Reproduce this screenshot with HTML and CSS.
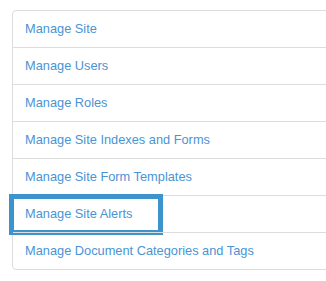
FILE: index.html
```html
<!DOCTYPE html>
<html lang="en">
<head>
  <meta charset="UTF-8" />
  <meta name="viewport" content="width=device-width, initial-scale=1.0" />
  <title>Administration</title>
  <link rel="stylesheet" href="styles.css">
</head>
<body>
  <div class="list-group">
    <a class="list-group-item" href="#">Manage Site</a>
    <a class="list-group-item" href="#">Manage Users</a>
    <a class="list-group-item" href="#">Manage Roles</a>
    <a class="list-group-item" href="#">Manage Site Indexes and Forms</a>
    <a class="list-group-item" href="#">Manage Site Form Templates</a>
    <a class="list-group-item marked" href="#">Manage Site Alerts<span class="callout"></span></a>
    <a class="list-group-item" href="#">Manage Document Categories and Tags</a>
  </div>
</body>
</html>
```

FILE: styles.css
```css
body {
  margin: 0;
  padding: 10px 0 0 12px;
  font-family: "Liberation Sans", Arial, sans-serif;
  font-size: 12.8px;
  background: #fff;
  overflow: hidden;
}
.list-group {
  display: flex;
  flex-direction: column;
  width: 340px;
  border: 1px solid #ddd;
  border-radius: 4px;
}
.list-group-item {
  position: relative;
  display: block;
  padding: 8px 12px;
  line-height: 20px;
  color: #4a94d4;
  text-decoration: none;
  border-top: 1px solid #ddd;
}
.list-group-item:first-child {
  border-top: none;
}
.callout {
  position: absolute;
  top: -2px;
  left: -4px;
  width: 144px;
  height: 31px;
  border: 5px solid #3d93cc;
}
```
